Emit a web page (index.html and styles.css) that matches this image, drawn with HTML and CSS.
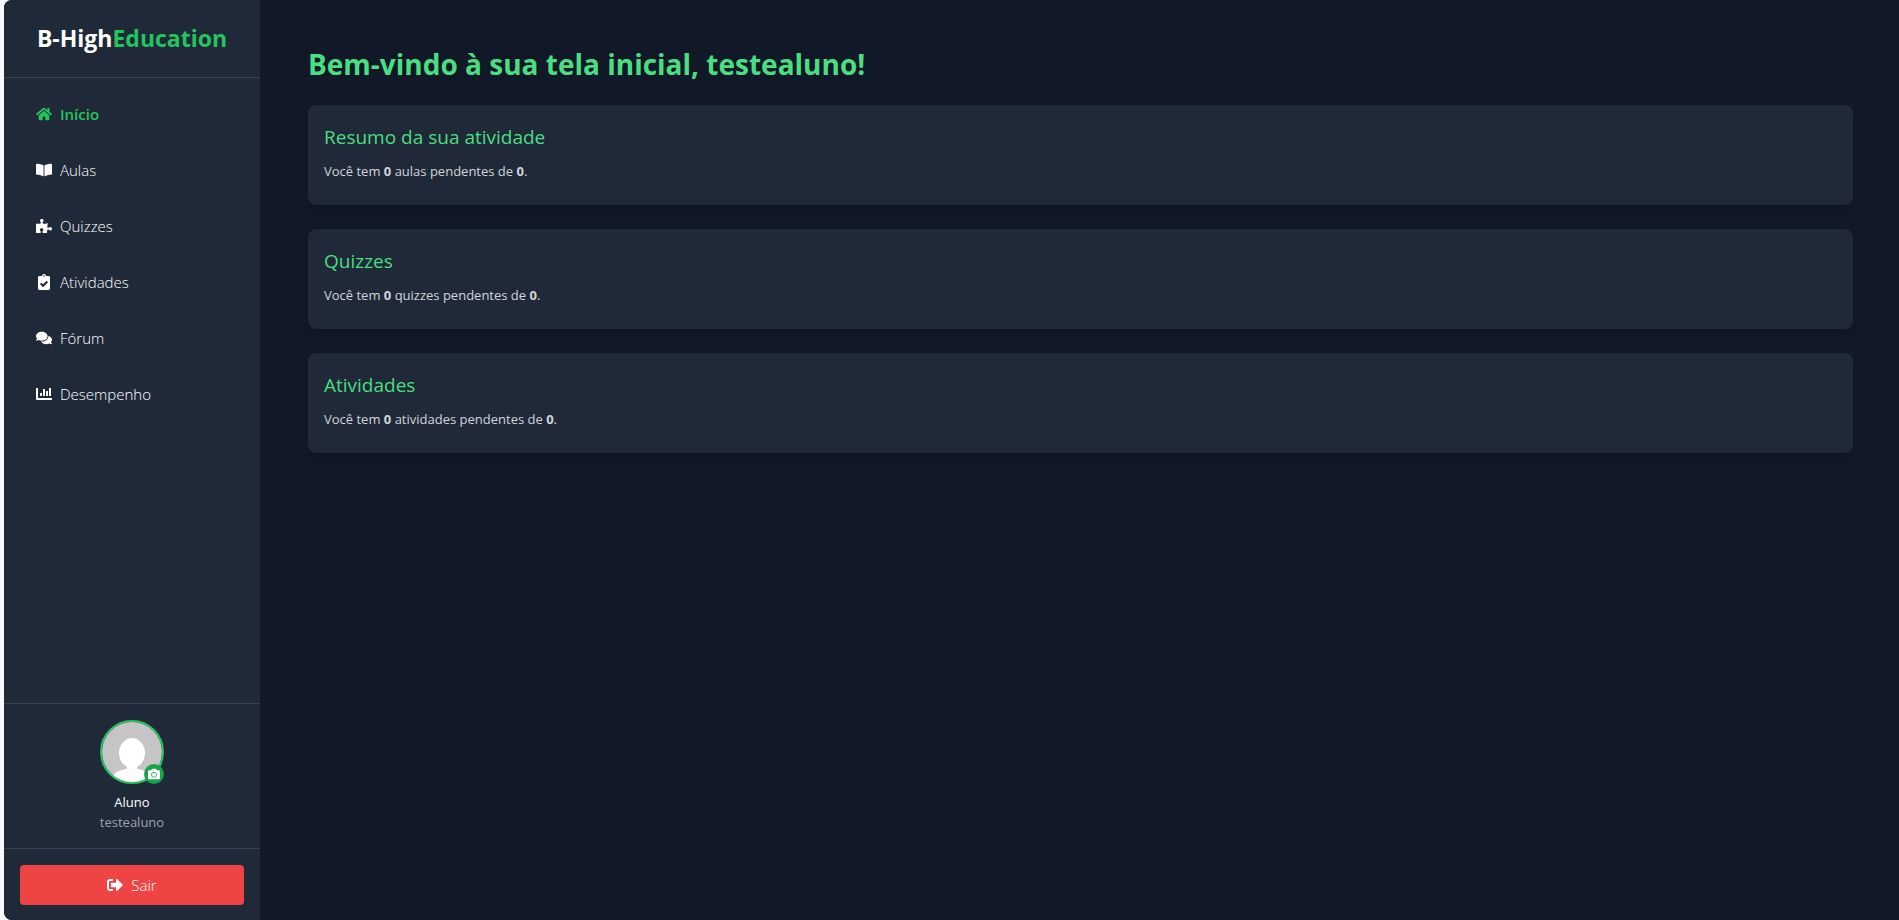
FILE: index.html
```html
<!DOCTYPE html>
<html lang="pt-BR">
<head>
<meta charset="utf-8">
<title>B-HighEducation</title>
<link rel="stylesheet" href="styles.css">
</head>
<body>
<div class="shell">
  <aside class="sidebar">
    <div class="brand">B-High<span class="brand-accent">Education</span></div>
    <nav class="nav">
      <a class="nav-link active" href="#inicio"><svg class="icon" viewBox="0 0 576 512"><path d="M280.37 148.26L96 300.11V464a16 16 0 0 0 16 16l112.06-.29a16 16 0 0 0 15.92-16V368a16 16 0 0 1 16-16h64a16 16 0 0 1 16 16v95.64a16 16 0 0 0 16 16.05L464 480a16 16 0 0 0 16-16V300L295.67 148.26a12.19 12.19 0 0 0-15.3 0zM571.6 251.47L488 182.56V44.05a12 12 0 0 0-12-12h-56a12 12 0 0 0-12 12v72.61L318.47 43a48 48 0 0 0-61 0L4.34 251.47a12 12 0 0 0-1.6 16.9l25.5 31A12 12 0 0 0 45.15 301l235.22-193.74a12.19 12.19 0 0 1 15.3 0L530.9 301a12 12 0 0 0 16.9-1.6l25.5-31a12 12 0 0 0-1.7-16.93z"/></svg>Início</a>
      <a class="nav-link" href="#aulas"><svg class="icon" viewBox="0 0 576 512"><path d="M542.22 32.05c-54.8 3.11-163.72 14.43-230.96 55.59-4.64 2.84-7.27 7.89-7.27 13.17v363.87c0 11.55 12.63 18.85 23.28 13.49 69.18-34.82 169.23-44.32 218.7-46.92 16.89-.89 30.02-14.43 30.02-30.66V62.75c.01-17.71-15.35-31.74-33.77-30.7zM264.73 87.64C197.5 46.48 88.58 35.17 33.78 32.05 15.36 31.01 0 45.04 0 62.75V400.6c0 16.24 13.13 29.78 30.02 30.66 49.49 2.6 149.59 12.11 218.77 46.95 10.62 5.35 23.21-1.94 23.21-13.46V100.63c0-5.29-2.62-10.14-7.27-12.99z"/></svg>Aulas</a>
      <a class="nav-link" href="#quizzes"><svg class="icon" viewBox="0 0 576 512"><path d="M519.442 288.651c-41.519 0-59.5 31.593-82.058 31.593C377.409 320.244 432 144 432 144s-196.288 80-196.288-3.297c0-35.827 36.288-46.25 36.288-85.985C272 19.216 243.885 0 210.539 0c-34.654 0-66.366 18.891-66.366 56.346 0 41.364 31.711 59.277 31.711 81.75C175.885 207.719 0 166.758 0 166.758v333.237s178.635 41.047 178.635-28.662c0-22.473-40-40.107-40-81.471 0-37.456 29.25-56.346 63.577-56.346 33.673 0 61.788 19.216 61.788 54.717 0 39.735-36.288 50.158-36.288 85.985 0 60.803 129.675 25.73 181.23 25.73 0 0-34.725-120.101 25.827-120.101 35.962 0 46.423 36.152 86.308 36.152C556.712 416 576 387.99 576 354.443c0-34.199-18.962-65.792-56.558-65.792z"/></svg>Quizzes</a>
      <a class="nav-link" href="#atividades"><svg class="icon" viewBox="0 0 384 512"><path d="M336 64h-80c0-35.3-28.7-64-64-64s-64 28.7-64 64H48C21.5 64 0 85.5 0 112v352c0 26.5 21.5 48 48 48h288c26.5 0 48-21.5 48-48V112c0-26.5-21.5-48-48-48zM192 40c13.3 0 24 10.7 24 24s-10.7 24-24 24-24-10.7-24-24 10.7-24 24-24zm121.2 231.8l-143 141.8c-4.7 4.7-12.3 4.6-17-.1l-82.6-83.3c-4.7-4.7-4.6-12.3.1-17L99.1 285c4.7-4.7 12.3-4.6 17 .1l46 46.4 106-105.2c4.7-4.7 12.3-4.6 17 .1l28.2 28.4c4.7 4.8 4.6 12.3-.1 17z"/></svg>Atividades</a>
      <a class="nav-link" href="#forum"><svg class="icon" viewBox="0 0 576 512"><path d="M416 192c0-88.4-93.1-160-208-160S0 103.6 0 192c0 34.3 14.1 65.9 38 92-13.4 30.2-35.5 54.2-35.8 54.5-2.2 2.3-2.8 5.7-1.5 8.7S4.8 352 8 352c36.6 0 66.9-12.3 88.7-25 32.2 15.7 70.3 25 111.3 25 114.9 0 208-71.6 208-160zm122 220c23.9-26 38-57.7 38-92 0-66.9-53.5-124.2-129.3-148.1.9 6.6 1.3 13.3 1.3 20.1 0 105.9-107.7 192-240 192-10.8 0-21.3-.8-31.7-1.9C207.8 439.6 281.8 480 368 480c41 0 79.1-9.2 111.3-25 21.8 12.7 52.1 25 88.7 25 3.2 0 6.1-1.9 7.3-4.8 1.3-2.9.7-6.3-1.5-8.7-.3-.3-22.4-24.2-35.8-54.5z"/></svg>Fórum</a>
      <a class="nav-link" href="#desempenho"><svg class="icon" viewBox="0 0 512 512"><path d="M332.8 320h38.4c6.4 0 12.8-6.4 12.8-12.8V172.8c0-6.4-6.4-12.8-12.8-12.8h-38.4c-6.4 0-12.8 6.4-12.8 12.8v134.4c0 6.4 6.4 12.8 12.8 12.8zm96 0h38.4c6.4 0 12.8-6.4 12.8-12.8V76.8c0-6.4-6.4-12.8-12.8-12.8h-38.4c-6.4 0-12.8 6.4-12.8 12.8v230.4c0 6.4 6.4 12.8 12.8 12.8zm-288 0h38.4c6.4 0 12.8-6.4 12.8-12.8v-70.4c0-6.4-6.4-12.8-12.8-12.8h-38.4c-6.4 0-12.8 6.4-12.8 12.8v70.4c0 6.4 6.4 12.8 12.8 12.8zm96 0h38.4c6.4 0 12.8-6.4 12.8-12.8V108.8c0-6.4-6.4-12.8-12.8-12.8h-38.4c-6.4 0-12.8 6.4-12.8 12.8v198.4c0 6.4 6.4 12.8 12.8 12.8zM496 384H64V80c0-8.84-7.16-16-16-16H16C7.16 64 0 71.16 0 80v336c0 17.67 14.33 32 32 32h464c8.84 0 16-7.16 16-16v-32c0-8.84-7.16-16-16-16z"/></svg>Desempenho</a>
    </nav>
    <div class="profile">
      <div class="avatar">
        <svg class="avatar-picture" viewBox="0 0 60 60" role="img" aria-label="Foto de perfil"><rect width="60" height="60" fill="#c5c5c5"/><ellipse cx="30" cy="31" rx="13" ry="15" fill="#fff"/><path d="M25 42h10v4c1 2 4 1 8 3 5 2 7 5 8 11H9c1-6 3-9 8-11 4-2 7-1 8-3z" fill="#fff"/></svg>
        <button class="avatar-edit" type="button" aria-label="Alterar foto"><svg class="icon-small" viewBox="0 0 512 512"><path d="M512 144v288c0 26.500-21.500 48-48 48H48c-26.500 0-48-21.500-48-48V144c0-26.500 21.500-48 48-48h88l12.300-32.900c7-18.700 24.900-31.100 44.900-31.100h125.500c20 0 37.900 12.400 44.900 31.100L376 96h88c26.500 0 48 21.500 48 48zM376 288c0-66.200-53.800-120-120-120s-120 53.800-120 120 53.800 120 120 120 120-53.800 120-120zm-32 0c0 48.500-39.500 88-88 88s-88-39.500-88-88 39.500-88 88-88 88 39.500 88 88z"/></svg></button>
      </div>
      <p class="profile-role">Aluno</p>
      <p class="profile-user">testealuno</p>
    </div>
    <div class="logout">
      <button class="logout-button" type="button"><svg class="icon" viewBox="0 0 512 512"><path d="M497 273L329 441c-15 15-41 4.500-41-17v-96H152c-13.300 0-24-10.700-24-24v-96c0-13.300 10.700-24 24-24h136V88c0-21.400 25.900-32 41-17l168 168c9.300 9.400 9.300 24.600 0 34zM192 436v-40c0-6.600-5.400-12-12-12H96c-17.700 0-32-14.300-32-32V160c0-17.700 14.300-32 32-32h84c6.600 0 12-5.400 12-12V76c0-6.600-5.400-12-12-12H96c-53 0-96 43-96 96v192c0 53 43 96 96 96h84c6.600 0 12-5.400 12-12z"/></svg>Sair</button>
    </div>
  </aside>
  <main class="main">
    <h1 class="title">Bem-vindo à sua tela inicial, testealuno!</h1>
    <div class="cards">
      <section class="card">
        <h2 class="card-title">Resumo da sua atividade</h2>
        <p class="card-text">Você tem <strong>0</strong> aulas pendentes de <strong>0</strong>.</p>
      </section>
      <section class="card">
        <h2 class="card-title">Quizzes</h2>
        <p class="card-text">Você tem <strong>0</strong> quizzes pendentes de <strong>0</strong>.</p>
      </section>
      <section class="card">
        <h2 class="card-title">Atividades</h2>
        <p class="card-text">Você tem <strong>0</strong> atividades pendentes de <strong>0</strong>.</p>
      </section>
    </div>
  </main>
</div>
</body>
</html>
```

FILE: styles.css
```css
* {
  box-sizing: border-box;
}

body {
  margin: 0;
  padding-left: 4px;
  background: #f8f9fa;
  font-family: "Open Sans", "Noto Sans", sans-serif;
  font-size: 15px;
  line-height: 24px;
  color: #fff;
}

h1, h2, p {
  margin: 0;
}

.shell {
  display: flex;
  min-height: 100vh;
  background: #111827;
  border-radius: 8px 0 0 8px;
  overflow: hidden;
}

.sidebar {
  display: flex;
  flex-direction: column;
  flex: none;
  width: 256px;
  background: #1f2937;
}

.brand {
  padding: 22px 16px;
  border-bottom: 1px solid #374151;
  font-size: 23px;
  font-weight: 700;
  line-height: 33px;
  text-align: center;
}

.brand-accent {
  color: #22c55e;
}

.nav {
  display: flex;
  flex-direction: column;
  flex: 1;
  gap: 8px;
  padding: 12px 16px;
}

.nav-link {
  display: flex;
  align-items: center;
  gap: 8px;
  padding: 12px 16px;
  color: #fff;
  font-weight: 300;
  text-decoration: none;
}

.nav-link.active {
  color: #22c55e;
  font-weight: 600;
}

.icon {
  flex: none;
  width: 16px;
  height: 16px;
  fill: currentColor;
}

.profile {
  display: flex;
  flex-direction: column;
  align-items: center;
  padding: 16px;
  border-top: 1px solid #374151;
  font-size: 13px;
  line-height: 20px;
}

.avatar {
  position: relative;
  width: 64px;
  height: 64px;
  margin-bottom: 8px;
}

.avatar-picture {
  display: block;
  width: 64px;
  height: 64px;
  border: 2px solid #22c55e;
  border-radius: 50%;
}

.avatar-edit {
  position: absolute;
  right: 0;
  bottom: 0;
  display: flex;
  align-items: center;
  justify-content: center;
  width: 20px;
  height: 20px;
  padding: 0;
  border: 0;
  border-radius: 50%;
  background: #16a34a;
  color: #fff;
}

.icon-small {
  width: 12px;
  height: 12px;
  fill: currentColor;
}

.profile-user {
  color: #9ca3af;
}

.logout {
  padding: 16px 16px 15px;
  border-top: 1px solid #374151;
}

.logout-button {
  display: flex;
  align-items: center;
  justify-content: center;
  gap: 8px;
  width: 100%;
  padding: 8px 16px;
  border: 0;
  border-radius: 4px;
  background: #ef4444;
  color: #fff;
  font: inherit;
  font-weight: 300;
}

.main {
  flex: 1;
  padding: 48px 46px 48px 48px;
}

.title {
  margin-bottom: 24px;
  color: #4ade80;
  font-size: 28px;
  font-weight: 700;
  line-height: 33px;
}

.cards {
  display: grid;
  gap: 24px;
}

.card {
  padding: 16px 16px 24px;
  border-radius: 8px;
  background: #1f2937;
  box-shadow: 0 4px 6px rgba(0, 0, 0, 0.1);
}

.card-title {
  margin-bottom: 8px;
  color: #4ade80;
  font-size: 19px;
  font-weight: 500;
  line-height: 32px;
}

.card-text {
  color: #d1d5db;
  font-size: 13px;
  line-height: 20px;
}
```
